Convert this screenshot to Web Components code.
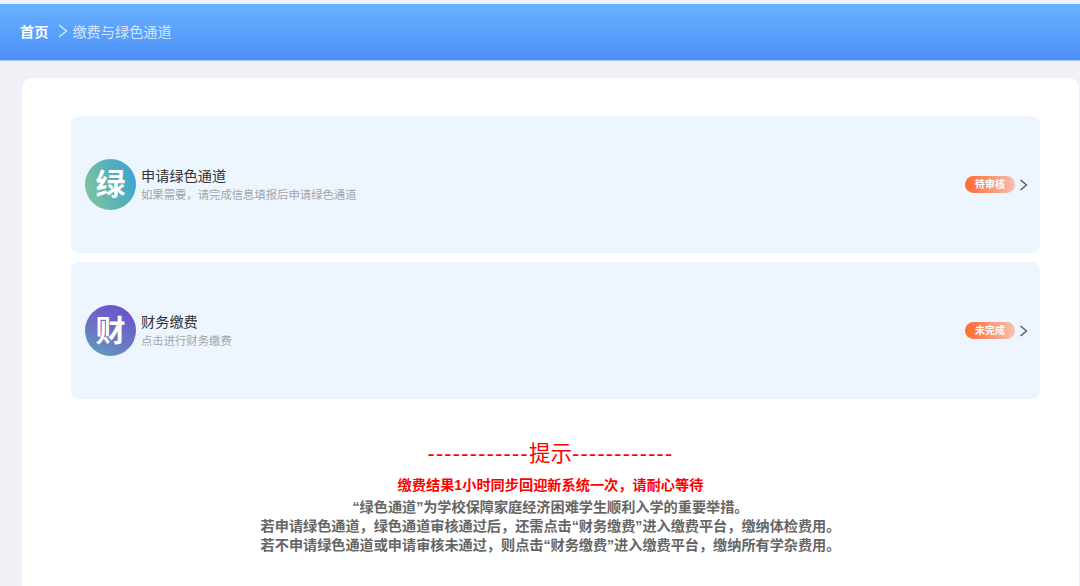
<!DOCTYPE html>
<html lang="zh-CN">
<head>
<meta charset="utf-8">
<title>缴费与绿色通道</title>
<style>
  html, body {
    margin: 0;
    height: 586px;
    overflow: hidden;
    background: #eff1f6;
    font-family: "Liberation Sans", "Noto Sans CJK SC", sans-serif;
  }
</style>
</head>
<body>
<fee-page>
  <top-bar slot="bar" home="首页" current="缴费与绿色通道"></top-bar>
  <service-row title="申请绿色通道" sub="如果需要，请完成信息填报后申请绿色通道" letter="绿" tone="green" status="待审核"></service-row>
  <service-row title="财务缴费" sub="点击进行财务缴费" letter="财" tone="purple" status="未完成"></service-row>
  <notice-block slot="notice" heading="提示" alert="缴费结果1小时同步回迎新系统一次，请耐心等待">
    <p>“绿色通道”为学校保障家庭经济困难学生顺利入学的重要举措。</p>
    <p>若申请绿色通道，绿色通道审核通过后，还需点击“财务缴费”进入缴费平台，缴纳体检费用。</p>
    <p>若不申请绿色通道或申请审核未通过，则点击“财务缴费”进入缴费平台，缴纳所有学杂费用。</p>
  </notice-block>
</fee-page>

<script>
class FeePage extends HTMLElement {
  constructor() {
    super();
    this.attachShadow({ mode: 'open' });
  }

  connectedCallback() {
    this.shadowRoot.innerHTML = `
      <style>
        :host {
          display: block;
          padding-top: 4px;
        }

        .card {
          margin: 17px 1px 0 22px;
          padding: 38px 39px 0 49px;
          height: 508px;
          box-sizing: border-box;
          overflow: hidden;
          background: #fff;
          border-radius: 10px 10px 0 0;
          display: flex;
          flex-direction: column;
          gap: 9px;
        }
      </style>

      <slot name="bar"></slot>
      <div class="card">
        <slot></slot>
        <slot name="notice"></slot>
      </div>
    `;
  }
}

class TopBar extends HTMLElement {
  constructor() {
    super();
    this.attachShadow({ mode: 'open' });
  }

  connectedCallback() {
    this.shadowRoot.innerHTML = `
      <style>
        :host {
          display: flex;
          align-items: center;
          height: 57px;
          padding: 0 0 2px 20px;
          box-sizing: border-box;
          background: linear-gradient(180deg, #69b2ff 0%, #4b8ff5 100%);
          border-bottom: 1px solid #a9c8f8;
          font-size: 14.2px;
          color: #fff;
        }

        b {
          font-weight: 700;
        }

        svg {
          width: 10px;
          height: 14px;
          margin: 0 4px 0 10px;
        }

        span {
          color: #d5e5fc;
        }
      </style>

      <b>${this.getAttribute('home')}</b>
      <svg viewBox="0 0 10 14" fill="none" stroke="#dbe9fd" stroke-width="1.4"><path d="M1 1l7.5 6L1 13"/></svg>
      <span>${this.getAttribute('current')}</span>
    `;
  }
}

class ServiceRow extends HTMLElement {
  constructor() {
    super();
    this.attachShadow({ mode: 'open' });
  }

  connectedCallback() {
    const tone = this.getAttribute('tone');
    const fill = tone === 'green'
      ? 'linear-gradient(70deg, #84c79b 0%, #5cb3b5 50%, #35a2d8 100%)'
      : 'linear-gradient(205deg, #6c4bd0 0%, #6a74c4 55%, #5fa2bd 100%)';

    this.shadowRoot.innerHTML = `
      <style>
        :host {
          display: flex;
          align-items: center;
          height: 137px;
          padding: 0 12px 0 14px;
          background: #edf5fe;
          border-radius: 8px;
        }

        .icon {
          flex: none;
          width: 51px;
          height: 51px;
          margin-right: 5px;
          border-radius: 50%;
          background: ${fill};
          color: #fff;
          font-size: 30px;
          font-weight: 700;
          line-height: 51px;
          text-align: center;
        }

        .text {
          flex: 1;
          min-width: 0;
          padding-top: 2px;
        }

        .title {
          font-size: 14.2px;
          line-height: 19px;
          color: #333;
        }

        .sub {
          font-size: 11.35px;
          line-height: 18px;
          color: #a3a5a9;
        }

        .badge {
          width: 50px;
          height: 17px;
          border-radius: 9px;
          background: linear-gradient(90deg, #ff6a30 0%, #f7c0b0 100%);
          color: #fff;
          font-size: 10px;
          font-weight: 700;
          line-height: 17px;
          text-align: center;
        }

        svg {
          width: 9px;
          height: 12px;
          margin-left: 4px;
        }
      </style>

      <div class="icon">${this.getAttribute('letter')}</div>
      <div class="text">
        <div class="title">${this.getAttribute('title')}</div>
        <div class="sub">${this.getAttribute('sub')}</div>
      </div>
      <div class="badge">${this.getAttribute('status')}</div>
      <svg viewBox="0 0 9 12" fill="none" stroke="#555b66" stroke-width="1.4"><path d="M1.5 1l6 5-6 5"/></svg>
    `;
  }
}

class NoticeBlock extends HTMLElement {
  constructor() {
    super();
    this.attachShadow({ mode: 'open' });
  }

  connectedCallback() {
    this.shadowRoot.innerHTML = `
      <style>
        :host {
          display: block;
          padding-top: 30px;
          margin-right: 10px;
          text-align: center;
        }

        .heading {
          font-size: 21.5px;
          line-height: 32px;
          color: #f00;
        }

        .heading i {
          font-style: normal;
          letter-spacing: 1.3px;
        }

        .alert {
          margin-top: 6px;
          font-size: 14.2px;
          font-weight: 700;
          line-height: 19px;
          color: #f00;
        }

        .body {
          font-size: 14.15px;
          font-weight: 700;
          line-height: 19px;
          color: #666;
          margin-top: 3px;
        }

        ::slotted(p) {
          margin: 0;
        }
      </style>

      <div class="heading"><i>------------</i>${this.getAttribute('heading')}<i>------------</i></div>
      <div class="alert">${this.getAttribute('alert')}</div>
      <div class="body"><slot></slot></div>
    `;
  }
}

customElements.define('fee-page', FeePage);
customElements.define('top-bar', TopBar);
customElements.define('service-row', ServiceRow);
customElements.define('notice-block', NoticeBlock);
</script>
</body>
</html>
